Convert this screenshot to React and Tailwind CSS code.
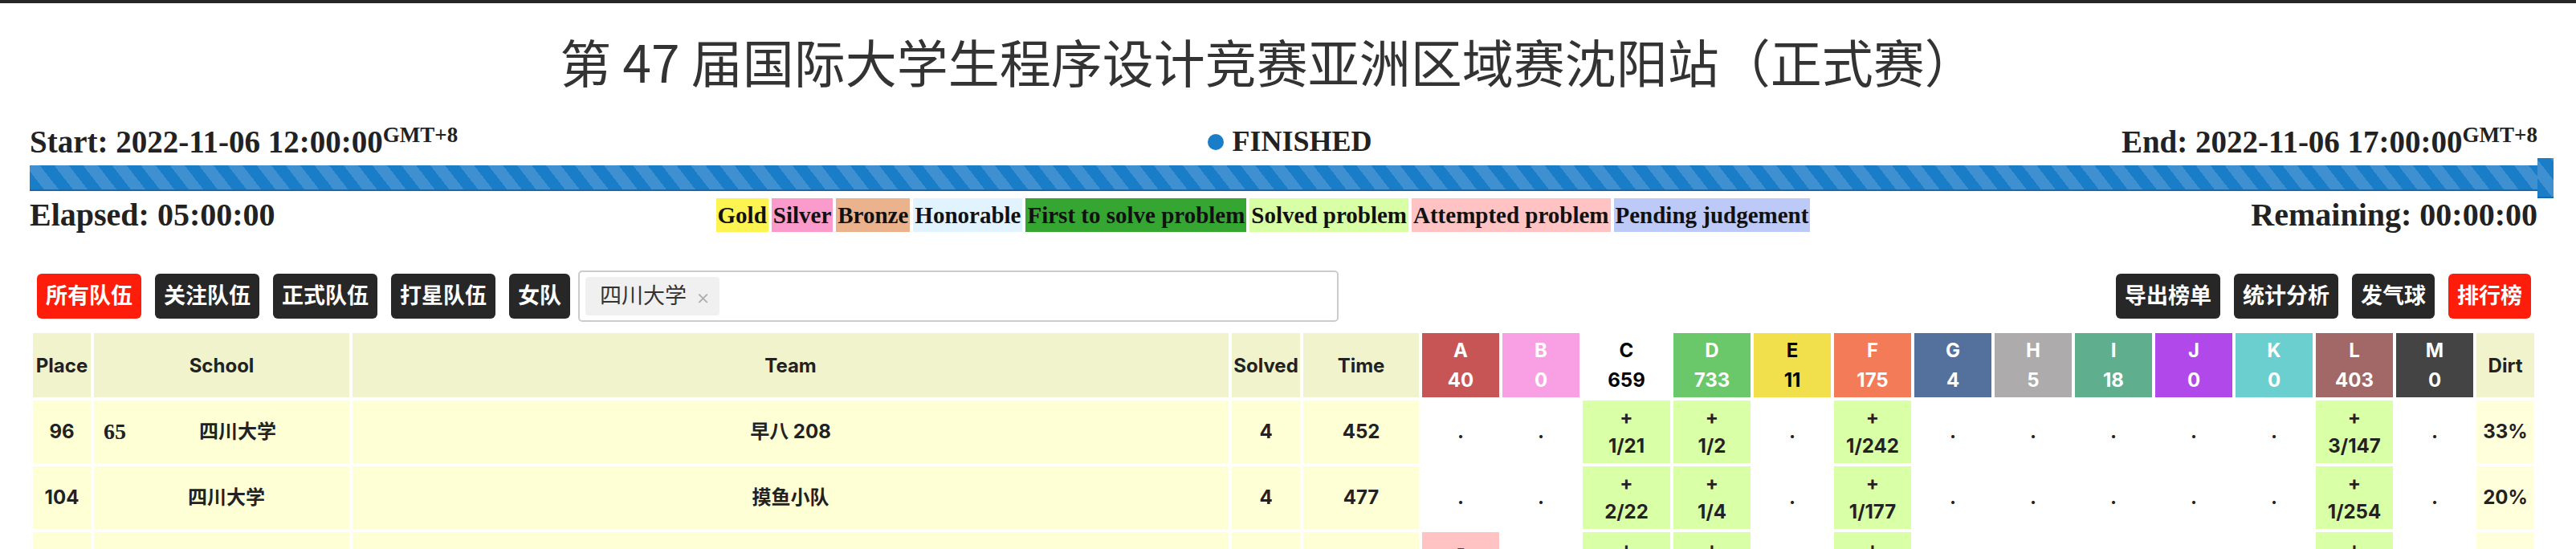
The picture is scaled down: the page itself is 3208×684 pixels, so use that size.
import React from 'react';

const serif = "font-['Liberation_Serif','Noto_Sans_CJK_SC',serif]";
const sans = "font-['Inter','Noto_Sans_CJK_SC',sans-serif]";
const stripes = "bg-[repeating-linear-gradient(52deg,#1a7dc8_0px,#1a7dc8_14px,#3e90d0_14px,#3e90d0_28.4px)]";

const legend = [
    {label: 'Gold', cls: 'bg-[#fdf452]'},
    {label: 'Silver', cls: 'bg-[#fa9bcb]'},
    {label: 'Bronze', cls: 'bg-[#ebb28e]'},
    {label: 'Honorable', cls: 'bg-[#e1f3fe]'},
    {label: 'First to solve problem', cls: 'bg-[#35a632]'},
    {label: 'Solved problem', cls: 'bg-[#d9ffa6]'},
    {label: 'Attempted problem', cls: 'bg-[#ffc3c3]'},
    {label: 'Pending judgement', cls: 'bg-[#bdcaf7]'},
];

const problems = [
    {id: 'A', count: 40, cls: 'bg-[#c85555] text-white w-[96px]'},
    {id: 'B', count: 0, cls: 'bg-[#f9a0e5] text-white w-[96px]'},
    {id: 'C', count: 659, cls: 'bg-white text-black w-[109px]'},
    {id: 'D', count: 733, cls: 'bg-[#6ac86a] text-white w-[96px]'},
    {id: 'E', count: 11, cls: 'bg-[#f2df4c] text-black w-[96px]'},
    {id: 'F', count: 175, cls: 'bg-[#f37b58] text-white w-[96px]'},
    {id: 'G', count: 4, cls: 'bg-[#54709c] text-white w-[96px]'},
    {id: 'H', count: 5, cls: 'bg-[#adabab] text-white w-[96px]'},
    {id: 'I', count: 18, cls: 'bg-[#5fae8e] text-white w-[96px]'},
    {id: 'J', count: 0, cls: 'bg-[#b149ea] text-white w-[96px]'},
    {id: 'K', count: 0, cls: 'bg-[#6ccfcf] text-white w-[96px]'},
    {id: 'L', count: 403, cls: 'bg-[#a26767] text-white w-[96px]'},
    {id: 'M', count: 0, cls: 'bg-[#444444] text-white w-[96px]'},
];

// s = solved "tries/time", a = attempted tries, null = untouched
const rows = [
    {
        place: 96, rank: 65, school: '四川大学', team: '早八 208', solved: 4, time: 452, dirt: '33%',
        cells: [null, null, {s: '1/21'}, {s: '1/2'}, null, {s: '1/242'}, null, null, null, null, null, {s: '3/147'}, null],
    },
    {
        place: 104, school: '四川大学', team: '摸鱼小队', solved: 4, time: 477, dirt: '20%',
        cells: [null, null, {s: '2/22'}, {s: '1/4'}, null, {s: '1/177'}, null, null, null, null, null, {s: '1/254'}, null],
    },
    {
        place: 139, school: '四川大学', team: '三缺一', solved: 4, time: 598, dirt: '33%',
        cells: [{a: '2'}, null, {s: '1/35'}, {s: '1/9'}, null, {s: '2/201'}, null, null, null, null, null, {s: '1/286'}, null],
    },
];

const Btn = ({children, red}) => (
    <div
        className={`h-[56px] px-[11px] flex items-center rounded-[6px] text-white text-[27px] font-bold ${sans} ${red ? 'bg-[#fe1d0b]' : 'bg-[#272727]'}`}>
        {children}
    </div>
);

const ProblemCell = ({cell}) => {
    if (!cell) {
        return <td className="text-center leading-[36px] py-[3px]">.</td>;
    }
    if (cell.s) {
        return (
            <td className="bg-[#d9ffa7] text-center leading-[36px] py-[3px]">
                <div>+</div>
                <div>{cell.s}</div>
            </td>
        );
    }
    return (
        <td className="bg-[#ffc3c3] text-center leading-[36px] py-[3px]">
            <div>-</div>
            <div>{cell.a}</div>
        </td>
    );
};

const App = () => {
    return (
        <div className="w-full min-h-screen bg-white">
            <div className="h-[4px] bg-[#262626]"></div>

            <h1 className={`mt-[39px] pr-[50px] text-center text-[64px] leading-[64px] font-normal text-[#333] font-['Noto_Sans_CJK_SC',sans-serif]`}>
                第 47 届国际大学生程序设计竞赛亚洲区域赛沈阳站（正式赛）
            </h1>

            <div className={`pl-[37px] pr-[48px] ${serif} text-[#222] font-bold`}>
                <div className="mt-[49px] h-[41px] flex justify-between items-end text-[39px] leading-[41px]">
                    <div>Start: 2022-11-06 12:00:00<sup className="text-[27px]">GMT+8</sup></div>
                    <div className="flex items-center gap-[11px] text-[36px]">
                        <span className="w-[20px] h-[20px] rounded-full bg-[#1a7dc8]"></span>
                        <span>FINISHED</span>
                    </div>
                    <div>End: 2022-11-06 17:00:00<sup className="text-[27px]">GMT+8</sup></div>
                </div>

                <div className="h-[50px] flex items-center">
                    <div className={`flex-1 h-[32px] border-b-2 border-[#1768ad] ${stripes}`}></div>
                    <div className={`w-[20px] h-[50px] -mr-[20px] border-b-2 border-[#1768ad] ${stripes}`}></div>
                </div>

                <div className="h-[42px] flex justify-between items-center text-[40px] leading-[42px]">
                    <div>Elapsed: 05:00:00</div>
                    <div className="flex gap-[4px] text-[29px] text-[#111]">
                        {legend.map((l) => (
                            <span key={l.label} className={`h-[42px] px-[2px] flex items-center ${l.cls}`}>
                                {l.label}
                            </span>
                        ))}
                    </div>
                    <div>Remaining: 00:00:00</div>
                </div>

                <div className="mt-[48px] pl-[9px] pr-[8px] flex justify-between items-center font-normal">
                    <div className="flex items-center">
                        <div className="flex gap-[17px]">
                            <Btn red>所有队伍</Btn>
                            <Btn>关注队伍</Btn>
                            <Btn>正式队伍</Btn>
                            <Btn>打星队伍</Btn>
                            <Btn>女队</Btn>
                        </div>
                        <div className={`ml-[10px] w-[947px] h-[64px] border-2 border-[#cccccc] rounded-[5px] pl-[7px] flex items-center ${sans}`}>
                            <div className="h-[48px] pl-[18px] pr-[12px] flex items-center gap-[12px] bg-[#f0f0f0] rounded-[4px]">
                                <span className="text-[27px] text-[#333]">四川大学</span>
                                <span className="text-[26px] font-light text-[#aaa]">×</span>
                            </div>
                        </div>
                    </div>
                    <div className="flex gap-[17px]">
                        <Btn>导出榜单</Btn>
                        <Btn>统计分析</Btn>
                        <Btn>发气球</Btn>
                        <Btn red>排行榜</Btn>
                    </div>
                </div>

                <table className={`mt-[10px] w-full table-fixed border-separate border-spacing-1 ${sans} text-[24px] font-bold text-[#222]`}>
                    <thead>
                    <tr className="leading-[37px]">
                        <th className="w-[72px] py-[3px] bg-[#f0f3cc]">Place</th>
                        <th className="w-[318px] py-[3px] bg-[#f0f3cc]">School</th>
                        <th className="py-[3px] bg-[#f0f3cc]">Team</th>
                        <th className="w-[85px] py-[3px] bg-[#f0f3cc]">Solved</th>
                        <th className="w-[144px] py-[3px] bg-[#f0f3cc]">Time</th>
                        {problems.map((p) => (
                            <th key={p.id} className={`py-[3px] ${p.cls}`}>
                                <div>{p.id}</div>
                                <div>{p.count}</div>
                            </th>
                        ))}
                        <th className="w-[72px] py-[3px] bg-[#f0f3cc]">Dirt</th>
                    </tr>
                    </thead>
                    <tbody>
                    {rows.map((r) => (
                        <tr key={r.place}>
                            <td className="bg-[#ffffd5] text-center py-[3px] leading-[36px]">{r.place}</td>
                            <td className="bg-[#ffffd5] py-[3px] leading-[36px] pl-[12px]">
                                <div className="flex items-center">
                                    {r.rank && <span className={`${serif} text-[28px]`}>{r.rank}</span>}
                                    <span className="flex-1 text-center">{r.school}</span>
                                </div>
                            </td>
                            <td className="bg-[#ffffd5] text-center py-[3px] leading-[36px]">{r.team}</td>
                            <td className="bg-[#ffffd5] text-center py-[3px] leading-[36px]">{r.solved}</td>
                            <td className="bg-[#ffffd5] text-center py-[3px] leading-[36px]">{r.time}</td>
                            {r.cells.map((c, i) => (
                                <ProblemCell key={i} cell={c}/>
                            ))}
                            <td className="bg-[#ffffdb] text-center py-[3px] leading-[36px]">{r.dirt}</td>
                        </tr>
                    ))}
                    </tbody>
                </table>
            </div>
        </div>
    );
};

export default App;
